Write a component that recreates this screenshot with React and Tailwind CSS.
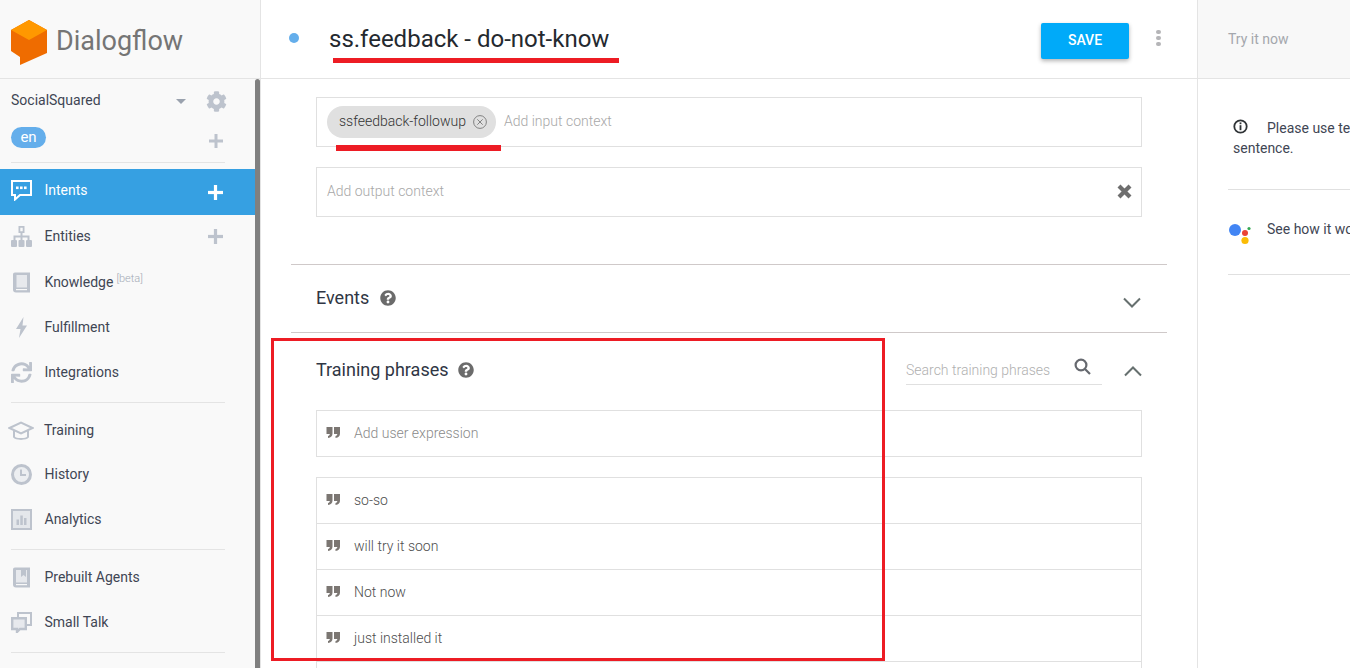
import React from "react";
import { FaCog, FaSync, FaQuestionCircle } from "react-icons/fa";

const G = "#bdc3cd";

const Quote = () => (
  <svg width="14" height="11" viewBox="0 0 14 11" className="shrink-0 -mt-[3px]" fill="#7b7672">
    <path d="M0.5 0H6.5V6.5C6.5 9 5 10.5 2 11V9C3.2 8.8 3.8 8 3.8 7H0.5Z" />
    <path d="M8 0H14V6.5C14 9 12.5 10.5 9.5 11V9C10.7 8.8 11.3 8 11.3 7H8Z" />
  </svg>
);

const Plus = ({ color = G, size = 14, w = 3 }) => (
  <svg width={size} height={size} viewBox="0 0 14 14" fill={color}>
    <rect x={7 - w / 2} y="0" width={w} height="14" />
    <rect x="0" y={7 - w / 2} width="14" height={w} />
  </svg>
);

const icons = {
  intents: (
    <svg width="21" height="21" viewBox="0 0 21 21">
      <path d="M1 1H20V15H9L4 19.5V15H1Z" fill="none" stroke="#fff" strokeWidth="2" />
      <rect x="5" y="6.5" width="2.6" height="2.6" fill="#fff" />
      <rect x="9" y="6.5" width="2.6" height="2.6" fill="#fff" />
      <rect x="13" y="6.5" width="2.6" height="2.6" fill="#fff" />
    </svg>
  ),
  entities: (
    <svg width="21" height="21" viewBox="0 0 21 21" fill={G}>
      <path d="M7.5 0H13.5V7H11.5V9.5H18.5V14H16.5V11.5H11.5V14H9.5V11.5H4.5V14H2.5V9.5H9.5V7H7.5ZM9.3 1.8V5.2H11.7V1.8Z" fillRule="evenodd" />
      <rect x="0" y="14" width="6" height="7" rx="1" />
      <rect x="7.5" y="14" width="6" height="7" rx="1" />
      <rect x="15" y="14" width="6" height="7" rx="1" />
    </svg>
  ),
  knowledge: (
    <svg width="21" height="21" viewBox="0 0 21 21">
      <path d="M4 0.5H19V20.5H5C3 20.5 2 19.5 2 17.5V2.5C2 1.2 2.7 0.5 4 0.5Z" fill={G} />
      <rect x="5.5" y="3" width="10.5" height="12.5" fill="#e7e9ed" />
      <rect x="5" y="17" width="11" height="1.2" fill="#f9f9f9" />
    </svg>
  ),
  fulfillment: (
    <svg width="21" height="21" viewBox="0 0 21 21">
      <path d="M12.5 0L5 12H9.5L8 21L16 8.5H11.5Z" fill={G} />
    </svg>
  ),
  integrations: <FaSync size={21} color={G} />,
  history: (
    <svg width="21" height="21" viewBox="0 0 21 21">
      <circle cx="10.5" cy="10.5" r="9" fill="#eceef1" stroke={G} strokeWidth="3" />
      <path d="M10 5.5V11H15" fill="none" stroke={G} strokeWidth="2" />
    </svg>
  ),
  analytics: (
    <svg width="21" height="21" viewBox="0 0 21 21">
      <rect x="1" y="1" width="19" height="19" fill="#e4e7eb" stroke={G} strokeWidth="2" />
      <rect x="5.5" y="10.5" width="2.5" height="5.5" fill={G} />
      <rect x="9.3" y="6.5" width="2.5" height="9.5" fill={G} />
      <rect x="13" y="9" width="2.5" height="7" fill={G} />
    </svg>
  ),
  prebuilt: (
    <svg width="21" height="21" viewBox="0 0 21 21">
      <path d="M4 0.5H19V20.5H5C3 20.5 2 19.5 2 17.5V2.5C2 1.2 2.7 0.5 4 0.5Z" fill={G} />
      <rect x="5" y="3" width="11" height="12.5" fill="#e7e9ed" />
      <path d="M10 3H15V10L12.5 8L10 10Z" fill={G} />
      <rect x="5" y="17" width="11" height="1.2" fill="#f9f9f9" />
    </svg>
  ),
  smalltalk: (
    <svg width="21" height="21" viewBox="0 0 21 21" fill="none" stroke={G} strokeWidth="2">
      <path d="M7 5V1H20V13H16" />
      <path d="M1.2 6.2H14.8V17H9L6 20V17H1.2Z" fill="#e7e9ed" strokeWidth="2.4" />
    </svg>
  ),
};

const Cap = () => (
  <svg width="26" height="20" viewBox="0 0 26 20" fill="none" stroke={G} strokeWidth="2">
    <path d="M1.5 7L13 1.5L24.5 7L13 12.5Z" />
    <path d="M6 10V16C8 18.5 18 18.5 20 16V10" />
  </svg>
);

const Divider = ({ className = "" }) => <div className={`h-px bg-[#e4e4e4] mx-[11px] w-[214px] ${className}`} />;

const Item = ({ icon, label, extra, plus, className = "" }) => (
  <div className={`h-[45px] shrink-0 pl-[11px] flex items-center ${className}`}>
    <span className="w-[21px] h-[21px] flex items-center justify-center shrink-0">{icons[icon]}</span>
    <span className="ml-[12.5px] text-[14px] leading-[16px] text-[#3f4654] -mt-[2px]">{label}</span>
    {extra && <span className="text-[11px] text-[#a3a9b5] ml-[3px] -mt-[9px] font-light leading-none">{extra}</span>}
    {plus && <span className="ml-auto mr-[37px] flex"><Plus size={15} /></span>}
  </div>
);

const Phrase = ({ text }) => (
  <div className="h-[46px] flex items-center pl-[9px] border-b border-[#e0e0e0]">
    <Quote />
    <span className="ml-[14px] text-[14px] font-light text-[#4d4d4d] -mt-px">{text}</span>
  </div>
);

const Section = ({ children, className = "" }) => (
  <div className={`mx-[55px] border border-[#e0e0e0] ${className}`}>{children}</div>
);

export default function App() {
  return (
    <div className="relative w-[1350px] h-[668px] overflow-hidden bg-white flex font-['Roboto',sans-serif]">
      {/* sidebar */}
      <aside className="w-[261px] shrink-0 h-full bg-[#f9f9f9] border-r border-[#e4e4e4] flex flex-col">
        <div className="h-[79px] shrink-0 border-b border-[#e4e4e4] flex items-center pl-[11px]">
          <svg width="36" height="45" viewBox="0 0 36 45" className="mt-[7px]">
            <path d="M18 0L36 10V33L9 45V37L0 31V10Z" fill="#ef6c00" />
            <path d="M18 0L36 10L18 20L0 10Z" fill="#ff9800" />
          </svg>
          <span className="ml-[9px] mt-[4px] text-[27px] leading-none text-[#757575]">Dialogflow</span>
        </div>
        <div className="relative flex-1 flex flex-col pt-[12px] overflow-hidden">
          <div className="absolute right-0 top-0 w-[5px] h-full bg-[#808080] rounded-t-[3px]" />
          <div className="h-[18px] flex items-center pl-[11px]">
            <span className="text-[14px] text-[#3f4654]">SocialSquared</span>
            <span className="ml-[75px] mt-[3px] w-0 h-0 border-x-[5px] border-x-transparent border-t-[5px] border-t-[#9aa2ae]" />
            <span className="ml-[20px] flex mt-[2px]"><FaCog size={21} color={G} /></span>
          </div>
          <div className="h-[21px] mt-[18px] flex items-center pl-[11px]">
            <span className="w-[35px] h-[21px] rounded-full bg-[#64aeeb] text-white text-[15px] flex items-center justify-center">en</span>
            <span className="ml-[163px] mt-[6px] flex"><Plus size={14} /></span>
          </div>
          <Divider className="mt-[14px] shrink-0" />
          <div className="mt-[6px] h-[46px] w-[255px] shrink-0 bg-[#36a0e2] pl-[11px] flex items-center text-white">
            <span className="w-[21px] h-[21px] flex items-center justify-center -mt-[4px]">{icons.intents}</span>
            <span className="ml-[12.5px] text-[14px] -mt-[4px]">Intents</span>
            <span className="ml-auto mr-[32px] flex"><Plus color="#fff" size={15} /></span>
          </div>
          <Item icon="entities" label="Entities" plus className="-mt-px" />
          <Item icon="knowledge" label="Knowledge" extra="[beta]" className="mt-px" />
          <Item icon="fulfillment" label="Fulfillment" />
          <Item icon="integrations" label="Integrations" />
          <Divider className="mt-[7px] shrink-0" />
          <div className="h-[44px] shrink-0 pl-[8px] flex items-center mt-[6px]">
            <Cap />
            <span className="ml-[10px] text-[14px] text-[#3f4654] -mt-[2px]">Training</span>
          </div>
          <Item icon="history" label="History" className="-mt-px" />
          <Item icon="analytics" label="Analytics" />
          <Divider className="mt-[7px] shrink-0" />
          <Item icon="prebuilt" label="Prebuilt Agents" className="mt-[5px]" />
          <Item icon="smalltalk" label="Small Talk" />
          <Divider className="mt-[7px] shrink-0" />
        </div>
      </aside>

      {/* main */}
      <main className="w-[936px] shrink-0 h-full flex flex-col">
        <header className="h-[79px] shrink-0 border-b border-[#e4e4e4] flex items-center">
          <span className="ml-[28px] -mt-[3px] w-[10px] h-[10px] rounded-full bg-[#64aeeb]" />
          <h1 className="ml-[30px] text-[24px] leading-none text-[#24292f] font-normal">ss.feedback - do-not-know</h1>
          <button className="ml-auto mt-[3px] w-[88px] h-[36px] rounded-[2px] bg-[#00aaf9] text-white text-[14px] font-medium shadow-[0_2px_4px_rgba(0,0,0,0.3)]">SAVE</button>
          <span className="ml-[27px] mr-[36px] -mt-[3px] flex flex-col gap-[2px]">
            <i className="block w-[5px] h-[4px] rounded-full bg-[#b5b5b8]" />
            <i className="block w-[5px] h-[4px] rounded-full bg-[#b5b5b8]" />
            <i className="block w-[5px] h-[4px] rounded-full bg-[#b5b5b8]" />
          </span>
        </header>

        <div className="flex-1 overflow-hidden pt-[18px]">
          <Section className="h-[50px] flex items-center pl-[10px]">
            <span className="h-[32px] w-[169px] rounded-full bg-[#e0e0e0] flex items-center pl-[12px]">
              <span className="text-[14px] font-light text-[#333] -mt-[2px]">ssfeedback-followup</span>
              <svg width="14" height="14" viewBox="0 0 14 14" className="ml-[7px]" fill="none" stroke="#777" strokeWidth="0.9">
                <circle cx="7" cy="7" r="6.4" />
                <path d="M4.3 4.3L9.7 9.7M9.7 4.3L4.3 9.7" />
              </svg>
            </span>
            <span className="ml-[8px] text-[14px] font-light text-[#a8a8a8] -mt-[2px]">Add input context</span>
          </Section>
          <Section className="h-[50px] mt-[20px] flex items-center pl-[10px] pr-[9px]">
            <span className="text-[14px] font-light text-[#a8a8a8] -mt-[2px]">Add output context</span>
            <svg width="15" height="15" viewBox="0 0 15 15" className="ml-auto -mt-[2px]" fill="none" stroke="#6e6e6e" strokeWidth="4.2">
              <path d="M2 2L13 13M13 2L2 13" />
            </svg>
          </Section>

          <div className="mx-[30px] mt-[47px] h-[69px] border-y border-[#cfc9c9] flex items-center pl-[25px] pr-[26px]">
            <span className="text-[18px] text-[#2f3644] -mt-[3px]">Events</span>
            <span className="ml-[11px] flex -mt-px"><FaQuestionCircle size={16} color="#6b6b6b" /></span>
            <svg width="18" height="11" viewBox="0 0 18 11" className="ml-auto mt-[7px]" fill="none" stroke="#66706f" strokeWidth="2">
              <path d="M1 1.5L9 9.5L17 1.5" />
            </svg>
          </div>

          <div className="mx-[55px] h-[77px] flex items-center">
            <span className="text-[18px] text-[#2f3644] -mt-[4px]">Training phrases</span>
            <span className="ml-[9px] flex -mt-[4px]"><FaQuestionCircle size={16} color="#6b6b6b" /></span>
            <div className="ml-auto w-[196px] h-[31px] -mt-[5px] border-b border-[#e0e0e0] flex items-start">
              <span className="text-[14px] font-light text-[#b0b0b0] mt-[6px]">Search training phrases</span>
              <svg width="17" height="17" viewBox="0 0 17 17" className="ml-auto mr-[11px] mt-[4px]" fill="none" stroke="#66696f" strokeWidth="2.2">
                <circle cx="7" cy="7" r="5.4" />
                <path d="M11 11L16 16" />
              </svg>
            </div>
            <svg width="18" height="11" viewBox="0 0 18 11" className="ml-[22px] -mt-px" fill="none" stroke="#66706f" strokeWidth="2">
              <path d="M1 9.5L9 1.5L17 9.5" />
            </svg>
          </div>

          <Section className="h-[47px] flex items-center pl-[9px]">
            <Quote />
            <span className="ml-[14px] text-[14px] font-light text-[#8a8a8a]">Add user expression</span>
          </Section>
          <Section className="mt-[20px] border-b-0">
            <Phrase text="so-so" />
            <Phrase text="will try it soon" />
            <Phrase text="Not now" />
            <Phrase text="just installed it" />
            <div className="h-[46px]" />
          </Section>
        </div>
      </main>

      {/* right panel */}
      <section className="flex-1 h-full border-l border-[#e4e4e4] flex flex-col min-w-0 overflow-hidden">
        <div className="h-[79px] shrink-0 bg-[#f8f8f8] border-b border-[#e4e4e4] flex items-center pl-[30px]">
          <span className="text-[14px] text-[#a4a7ad] mt-px">Try it now</span>
        </div>
        <div className="w-[400px] ml-[30px]">
          <div className="h-[111px] border-b border-[#e0e0e0] pt-[39px] pl-[5px]">
            <p className="text-[14px] leading-[20px] text-[#3f4654] w-[300px]">
              <svg width="15" height="15" viewBox="0 0 15 15" className="inline-block align-[-1px] mr-[19px]" fill="none">
                <circle cx="7.5" cy="7.5" r="6.2" stroke="#2f3336" strokeWidth="1.8" />
                <rect x="6.6" y="3.4" width="1.8" height="1.8" fill="#2f3336" />
                <rect x="6.6" y="6.2" width="1.8" height="5" fill="#2f3336" />
              </svg>
              Please use test console above to try a sentence.
            </p>
          </div>
          <div className="h-[85px] border-b border-[#e0e0e0] flex items-center whitespace-nowrap">
            <svg width="23" height="22" viewBox="0 0 23 22" className="shrink-0 mt-[3px]">
              <circle cx="7" cy="7" r="6" fill="#4285f4" />
              <circle cx="17" cy="10" r="3" fill="#ea4335" />
              <circle cx="21" cy="5.5" r="1.6" fill="#34a853" />
              <circle cx="17" cy="17.5" r="3.6" fill="#fbbc05" />
            </svg>
            <span className="ml-[16px] text-[14px] text-[#3f4654] -mt-[6px]">See how it works in Google Assistant.</span>
          </div>
        </div>
      </section>

      {/* red annotations over the screenshot */}
      <div className="absolute left-[333px] top-[58px] w-[286px] h-[5px] bg-[#ed1c24]" />
      <div className="absolute left-[336px] top-[145px] w-[165px] h-[6px] bg-[#ed1c24]" />
      <div className="absolute left-[271px] top-[338px] w-[614px] h-[323px] border-[3px] border-[#ed1c24]" />
    </div>
  );
}
